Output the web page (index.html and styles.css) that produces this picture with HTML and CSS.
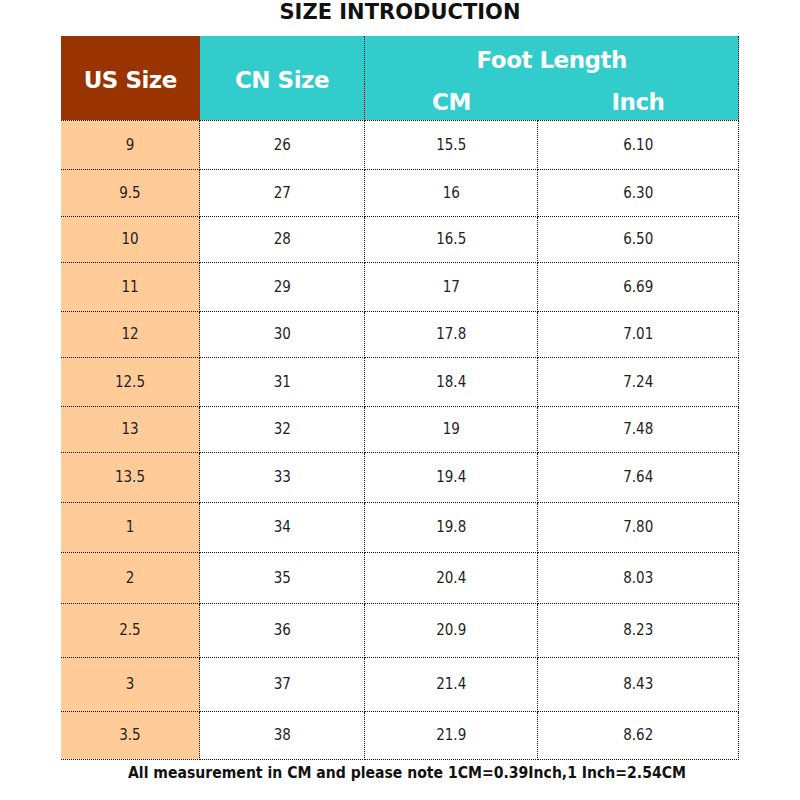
FILE: index.html
```html
<!DOCTYPE html>
<html>
<head>
<meta charset="utf-8">
<link rel="stylesheet" href="styles.css">
</head>
<body>
<div class="page">
  <h1 class="title">SIZE INTRODUCTION</h1>
  <table class="chart">
    <colgroup>
      <col class="c-us"><col class="c-cn"><col class="c-cm"><col class="c-in">
    </colgroup>
    <thead>
      <tr class="h1">
        <th rowspan="2" class="us-head">US Size</th>
        <th rowspan="2" class="cn-head">CN Size</th>
        <th colspan="2" class="foot-head">Foot Length</th>
      </tr>
      <tr class="h2">
        <th class="cm-head">CM</th>
        <th class="in-head">Inch</th>
      </tr>
    </thead>
    <tbody>
      <tr><td class="us">9</td><td>26</td><td>15.5</td><td>6.10</td></tr>
      <tr><td class="us">9.5</td><td>27</td><td>16</td><td>6.30</td></tr>
      <tr><td class="us">10</td><td>28</td><td>16.5</td><td>6.50</td></tr>
      <tr><td class="us">11</td><td>29</td><td>17</td><td>6.69</td></tr>
      <tr><td class="us">12</td><td>30</td><td>17.8</td><td>7.01</td></tr>
      <tr><td class="us">12.5</td><td>31</td><td>18.4</td><td>7.24</td></tr>
      <tr><td class="us">13</td><td>32</td><td>19</td><td>7.48</td></tr>
      <tr><td class="us">13.5</td><td>33</td><td>19.4</td><td>7.64</td></tr>
      <tr><td class="us">1</td><td>34</td><td>19.8</td><td>7.80</td></tr>
      <tr><td class="us">2</td><td>35</td><td>20.4</td><td>8.03</td></tr>
      <tr><td class="us">2.5</td><td>36</td><td>20.9</td><td>8.23</td></tr>
      <tr><td class="us">3</td><td>37</td><td>21.4</td><td>8.43</td></tr>
      <tr><td class="us">3.5</td><td>38</td><td>21.9</td><td>8.62</td></tr>
    </tbody>
  </table>
  <p class="note">All measurement in CM and please note 1CM=0.39Inch,1 Inch=2.54CM</p>
</div>
</body>
</html>
```
FILE: styles.css
```css
html, body {
  margin: 0;
  padding: 0;
  background: #ffffff;
}
.page {
  width: 800px;
  height: 800px;
  display: flex;
  flex-direction: column;
  align-items: center;
}
.title {
  margin: 0;
  height: 36px;
  line-height: 25px;
  font-family: "DejaVu Sans", sans-serif;
  font-weight: bold;
  font-size: 21px;
  color: #111;
  text-align: center;
}
.chart {
  border-collapse: collapse;
  table-layout: fixed;
  width: 678px;
  font-family: "DejaVu Sans Condensed", "DejaVu Sans", sans-serif;
}
.c-us { width: 139px; }
.c-cn { width: 165px; }
.c-cm { width: 173px; }
.c-in { width: 201px; }
.chart th {
  padding: 0;
  color: #ffffff;
  font-family: "DejaVu Sans", sans-serif;
  font-weight: bold;
  font-size: 23px;
  letter-spacing: -0.5px;
  background: #33cccc;
  border: none;
  vertical-align: middle;
}
.h1 { height: 48px; }
.h2 { height: 36px; }
.us-head { background: #993300 !important; padding-top: 4px !important; }
.cn-head { padding-top: 4px !important; border-right: 1px dotted #111 !important; }
.foot-head { border-right: 1px dotted #111 !important; }
.in-head { border-right: 1px dotted #111 !important; }
.chart thead tr.h2 th { border-bottom: 1px dotted #111; }
.us-head, .cn-head { border-bottom: 1px dotted #111 !important; }
.chart td {
  padding: 0;
  text-align: center;
  vertical-align: middle;
  font-size: 15px;
  color: #1e1e1e;
  border: 1px dotted #111;
}
.chart td:first-child { border-left: none; }
.chart td.us { background: #ffcc99; }
.chart tbody tr { height: 48px; }
.chart tbody tr:nth-child(1) { height: 49px; }
.chart tbody tr:nth-child(2) { height: 47px; }
.chart tbody tr:nth-child(3) { height: 46px; }
.chart tbody tr:nth-child(4) { height: 49px; }
.chart tbody tr:nth-child(5) { height: 46px; }
.chart tbody tr:nth-child(6) { height: 49px; }
.chart tbody tr:nth-child(7) { height: 46px; }
.chart tbody tr:nth-child(8) { height: 50px; }
.chart tbody tr:nth-child(9) { height: 50px; }
.chart tbody tr:nth-child(10) { height: 51px; }
.chart tbody tr:nth-child(11) { height: 54px; }
.chart tbody tr:nth-child(12) { height: 54px; }
.chart tbody tr:nth-child(13) { height: 48px; }
.note {
  margin: 0 0 0 14px;
  line-height: 26px;
  font-family: "DejaVu Sans Condensed", "DejaVu Sans", sans-serif;
  font-weight: bold;
  font-size: 15.6px;
  color: #111;
  text-align: center;
}
```
